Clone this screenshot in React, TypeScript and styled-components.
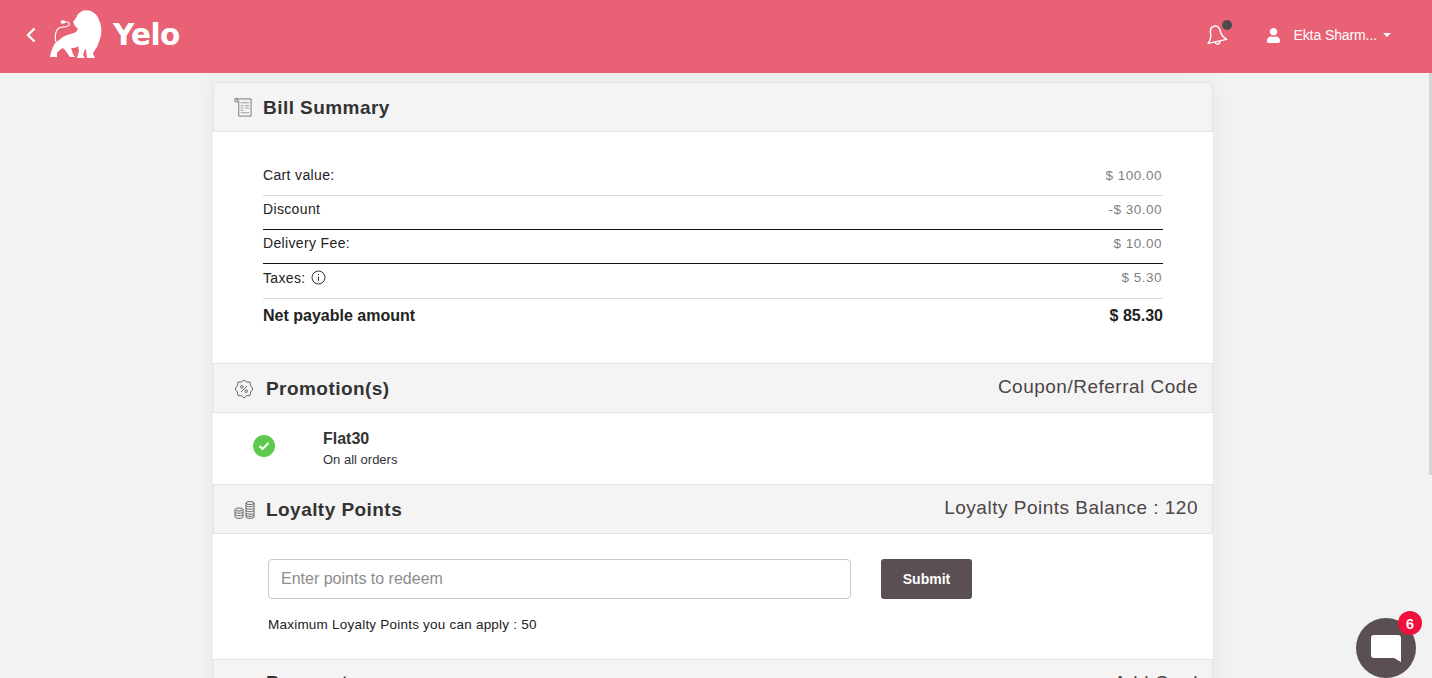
import React from "react";
import styled, { createGlobalStyle } from "styled-components";
import { FaUser } from "react-icons/fa";

const colors = {
  brand: "#e86175",
  page: "#f2f2f2",
  head: "#f4f4f4",
  line: "#e2e2e2",
  text: "#333333",
  muted: "#7f7f7f",
  dark: "#5a4f53",
};

const GlobalStyle = createGlobalStyle`
  html, body {
    margin: 0;
    height: 100%;
    overflow: hidden;
    background: ${colors.page};
    font-family: "Liberation Sans", Arial, sans-serif;
    color: ${colors.text};
  }
  * { box-sizing: border-box; }
`;

const HeaderRow = styled.header`
  display: flex;
  align-items: center;
  justify-content: space-between;
  height: 73px;
  padding: 0 41px 3px 26px;
  background-color: ${colors.brand};
  color: #fff;
`;

const Slot = styled.div`
  display: flex;
  align-items: center;
`;

const BackIcon = styled.svg`
  margin-right: 14px;
`;

const LogoText = styled.span`
  margin-left: 9px;
  font-family: "DejaVu Sans", sans-serif;
  font-size: 29.5px;
  font-weight: 700;
  letter-spacing: -0.6px;
`;

const BellWrap = styled.div`
  position: relative;
  width: 24px;
  height: 24px;
  margin-right: 39px;
`;

const BellDot = styled.span`
  position: absolute;
  top: -3px;
  right: -4px;
  width: 10px;
  height: 10px;
  border-radius: 50%;
  background: #4f4a4d;
`;

const UserIcon = styled(FaUser)`
  width: 13px;
  height: 15px;
  margin-right: 13px;
`;

const UserName = styled.span`
  font-size: 14px;
  letter-spacing: -0.1px;
`;

const Caret = styled.span`
  width: 0;
  height: 0;
  margin-left: 6px;
  border-top: 4px solid #fff;
  border-left: 4px solid transparent;
  border-right: 4px solid transparent;
`;

const Content = styled.div`
  padding-right: 6px;
`;

const ScrollThumb = styled.div`
  position: fixed;
  top: 73px;
  right: 0;
  width: 3px;
  height: 402px;
  background: #d4d4d4;
`;

const Card = styled.main`
  width: 1000px;
  margin: 9px auto 0;
  background: #fff;
  border-radius: 4px 4px 0 0;
  box-shadow: 0 0 24px rgba(0, 0, 0, 0.05);
`;

const SectionHead = styled.div<{ $first?: boolean }>`
  display: flex;
  align-items: center;
  justify-content: space-between;
  height: 50px;
  padding: 0 14px 0 19px;
  background: ${colors.head};
  border: 1px solid ${colors.line};
  border-top-left-radius: ${(p) => (p.$first ? "4px" : "0")};
  border-top-right-radius: ${(p) => (p.$first ? "4px" : "0")};
`;

const HeadTitle = styled.h2`
  display: flex;
  align-items: center;
  margin: 0;
  padding-top: 1px;
  font-size: 19px;
  font-weight: 700;
  letter-spacing: 0.45px;
  color: ${colors.text};
`;

const PaymentTitle = styled(HeadTitle)`
  padding-top: 0;
  margin-top: -2px;
`;

const IconBox = styled.span<{ $w?: number }>`
  display: flex;
  width: ${(p) => p.$w ?? 33}px;
  padding-left: 1px;
`;

const HeadAside = styled.span`
  margin-top: -3px;
  font-size: 19px;
  letter-spacing: 0.5px;
  color: #4d4548;
`;

const BillBody = styled.section`
  height: 231px;
  padding: 26px 50px 30px 50px;
`;

const BillRow = styled.div<{ $line?: "light" | "dark" | "none"; $h?: number; $pb?: number }>`
  display: flex;
  align-items: center;
  justify-content: space-between;
  height: ${(p) => p.$h ?? 34}px;
  padding-bottom: ${(p) => p.$pb ?? 7}px;
  font-size: 14px;
  letter-spacing: 0.35px;
  border-bottom: 1px solid
    ${(p) =>
      p.$line === "dark" ? "#111" : p.$line === "none" ? "transparent" : "#dcdcdc"};
`;

const Amount = styled.span`
  margin-right: 1px;
  color: ${colors.muted};
  font-size: 13.5px;
  letter-spacing: 0.5px;
`;

const Label = styled.span`
  display: flex;
  align-items: center;
  color: #222;
`;

const TotalRow = styled(BillRow)`
  font-size: 16px;
  font-weight: 700;
  letter-spacing: 0;
  color: #222;
`;

const InfoIcon = styled.svg`
  margin-left: 5px;
`;

const PromoBody = styled.section`
  display: flex;
  align-items: center;
  height: 71px;
  padding-left: 40px;
`;

const CheckBadge = styled.span`
  display: flex;
  align-items: center;
  justify-content: center;
  flex: none;
  width: 22px;
  height: 22px;
  margin-bottom: 5px;
  border-radius: 50%;
  background: #5ccb4b;
`;

const PromoText = styled.div`
  margin-left: 48px;
`;

const PromoName = styled.div`
  font-size: 16px;
  font-weight: 700;
  line-height: 20px;
`;

const PromoNote = styled.div`
  font-size: 13px;
  line-height: 18px;
  margin-top: 2px;
`;

const LoyaltyBody = styled.section`
  height: 125px;
  padding: 25px 0 0 55px;
`;

const RedeemRow = styled.div`
  display: flex;
  gap: 30px;
`;

const PointsInput = styled.input`
  width: 583px;
  height: 40px;
  padding: 0 12px;
  border: 1px solid #c9c9c9;
  border-radius: 4px;
  font-family: inherit;
  font-size: 16px;
  &::placeholder {
    color: #8c8c8c;
    opacity: 1;
  }
`;

const SubmitButton = styled.button`
  width: 91px;
  height: 40px;
  border: 0;
  border-radius: 3px;
  background: ${colors.dark};
  color: #fff;
  font-family: inherit;
  font-size: 14px;
  font-weight: 700;
`;

const MaxNote = styled.p`
  margin: 18px 0 0;
  font-size: 13.5px;
  line-height: 16px;
  letter-spacing: 0.22px;
  color: #222;
`;

const ChatButton = styled.div`
  position: fixed;
  right: 16px;
  bottom: 0;
  display: flex;
  align-items: center;
  justify-content: center;
  width: 60px;
  height: 60px;
  border-radius: 50%;
  background: ${colors.dark};
`;

const ChatCount = styled.span`
  position: absolute;
  top: -7px;
  right: -6px;
  display: flex;
  align-items: center;
  justify-content: center;
  width: 24px;
  height: 24px;
  border-radius: 50%;
  background: #f0103c;
  color: #fff;
  font-size: 15px;
  font-weight: 700;
`;

const LionLogo = () => (
  <svg width="54" height="50" viewBox="0 0 54 50" fill="#fff">
    <path d="M32 1 C35 0 38 0 41 1 C45 3 48 6 49 10 C51 14 52 20 51 25 C50 30 48 34 47 37 C45 40 43 42 43 44 L45 48 L37 48 L36 40 L35 39 L33 45 L35 48 L27 48 L29 41 L28 36 C26 38 24 38 21 38 L23 44 L25 47 L20 47 L15 40 L13 38 C11 39 8 41 7 43 L7 47 L0 47 L1 42 L3 37 C4 34 6 32 8 31 C11 28 14 26 17 25 C21 24 24 23 26 22 L28 19 L25 16 L23 12 L26 8 L28 4 Z" />
    <path
      d="M6 32 C4 26 6 20 9 18 C13 16 17 18 19 15 C20 13 18 12 17 12 L14 12"
      fill="none"
      stroke="#fff"
      strokeWidth="1.2"
    />
    <ellipse cx="13" cy="12" rx="2.4" ry="1.8" />
  </svg>
);

const BellIcon = () => (
  <svg width="24" height="24" viewBox="0 0 24 24" fill="none" stroke="#fff" strokeWidth="1.4">
    <g transform="rotate(-12 12 12)">
      <path
        d="M12 3 C8 3 7 7 7 10 C7 14 5 16 2.5 18.5 L21.5 18.5 C19 16 17 14 17 10 C17 7 16 3 12 3 Z"
        strokeLinejoin="round"
      />
      <path d="M9.5 19 C10 22 14 22 14.5 19" />
    </g>
  </svg>
);

const ReceiptIcon = () => (
  <svg width="19" height="19" viewBox="0 0 20 20" fill="none" stroke="#777" strokeWidth="1">
    <path d="M1 1 H4 V4 H1 Z" />
    <path d="M1 1 H18 V19 H5 V3" />
    <path d="M7 5 H16 M7 8 H10 M11.5 8 H16 M7 10.5 H10 M11.5 10.5 H16 M7 13 H10 M7 15.5 H16" stroke="#999" />
  </svg>
);

const PromoIcon = () => (
  <svg width="20" height="20" viewBox="0 0 20 20" fill="none" stroke="#666" strokeWidth="1">
    <path
      d="M10 1 L12.6 3 L16 3 L16.6 6.4 L19 10 L16.6 13 L16 16.6 L12.6 16.6 L10 19 L7.4 16.6 L4 16.6 L3.4 13 L1 10 L3.4 6.4 L4 3 L7.4 3 Z"
      strokeLinejoin="round"
    />
    <path d="M7 13 L13 7" />
    <circle cx="7.8" cy="7.8" r="1.3" />
    <circle cx="12.2" cy="12.2" r="1.3" />
  </svg>
);

const CoinsIcon = () => (
  <svg width="21" height="18" viewBox="0 0 21 18" fill="none" stroke="#666" strokeWidth="1">
    <ellipse cx="5" cy="8.5" rx="4" ry="1.5" />
    <path d="M1 8.5 V16 C1 17.8 9 17.8 9 16 V8.5 M1 11 C1 12.6 9 12.6 9 11 M1 13.5 C1 15.2 9 15.2 9 13.5" />
    <ellipse cx="16" cy="2" rx="4" ry="1.5" />
    <path d="M12 2 V16 C12 17.8 20 17.8 20 16 V2 M12 4.5 C12 6 20 6 20 4.5 M12 7 C12 8.6 20 8.6 20 7 M12 9.5 C12 11.1 20 11.1 20 9.5 M12 12 C12 13.6 20 13.6 20 12 M12 14.2 C12 15.8 20 15.8 20 14.2" />
  </svg>
);

export default function App() {
  return (
    <>
      <GlobalStyle />
      <HeaderRow>
        <Slot>
          <BackIcon width="10" height="16" viewBox="0 0 10 16" fill="none" stroke="#fff" strokeWidth="2.4">
            <path d="M8.5 1.5 L2 8 L8.5 14.5" />
          </BackIcon>
          <LionLogo />
          <LogoText>Yelo</LogoText>
        </Slot>
        <Slot>
          <BellWrap>
            <BellIcon />
            <BellDot />
          </BellWrap>
          <UserIcon />
          <UserName>Ekta Sharm...</UserName>
          <Caret />
        </Slot>
      </HeaderRow>

      <Content>
        <Card>
          <SectionHead $first>
            <HeadTitle>
              <IconBox $w={30}>
                <ReceiptIcon />
              </IconBox>
              Bill Summary
            </HeadTitle>
          </SectionHead>
          <BillBody>
            <BillRow $h={38} $pb={3}>
              <Label>Cart value:</Label>
              <Amount>$ 100.00</Amount>
            </BillRow>
            <BillRow $line="dark">
              <Label>Discount</Label>
              <Amount>-$ 30.00</Amount>
            </BillRow>
            <BillRow $line="dark">
              <Label>Delivery Fee:</Label>
              <Amount>$ 10.00</Amount>
            </BillRow>
            <BillRow $h={35}>
              <Label>
                Taxes:
                <InfoIcon width="15" height="15" viewBox="0 0 15 15" fill="none" stroke="#333">
                  <circle cx="7.5" cy="7.5" r="6.5" />
                  <path d="M7.5 6.5 V11 M7.5 4 V5" />
                </InfoIcon>
              </Label>
              <Amount>$ 5.30</Amount>
            </BillRow>
            <TotalRow $line="none" $pb={0}>
              <span>Net payable amount</span>
              <span>$ 85.30</span>
            </TotalRow>
          </BillBody>

          <SectionHead>
            <HeadTitle>
              <IconBox>
                <PromoIcon />
              </IconBox>
              Promotion(s)
            </HeadTitle>
            <HeadAside>Coupon/Referral Code</HeadAside>
          </SectionHead>
          <PromoBody>
            <CheckBadge>
              <svg width="12" height="10" viewBox="0 0 12 10" fill="none" stroke="#fff" strokeWidth="2">
                <path d="M1.5 5 L4.5 8 L10.5 2" />
              </svg>
            </CheckBadge>
            <PromoText>
              <PromoName>Flat30</PromoName>
              <PromoNote>On all orders</PromoNote>
            </PromoText>
          </PromoBody>

          <SectionHead>
            <HeadTitle>
              <IconBox>
                <CoinsIcon />
              </IconBox>
              Loyalty Points
            </HeadTitle>
            <HeadAside>Loyalty Points Balance : 120</HeadAside>
          </SectionHead>
          <LoyaltyBody>
            <RedeemRow>
              <PointsInput placeholder="Enter points to redeem" />
              <SubmitButton>Submit</SubmitButton>
            </RedeemRow>
            <MaxNote>Maximum Loyalty Points you can apply : 50</MaxNote>
          </LoyaltyBody>

          <SectionHead>
            <PaymentTitle>
              <IconBox />
              Payment
            </PaymentTitle>
            <HeadAside>Add Card</HeadAside>
          </SectionHead>
        </Card>
      </Content>

      <ScrollThumb />

      <ChatButton>
        <svg width="30" height="27" viewBox="0 0 30 27" fill="#fff">
          <path d="M3 0 H27 C29 0 30 1 30 3 V27 L23 23 H3 C1 23 0 22 0 20 V3 C0 1 1 0 3 0 Z" />
        </svg>
        <ChatCount>6</ChatCount>
      </ChatButton>
    </>
  );
}
